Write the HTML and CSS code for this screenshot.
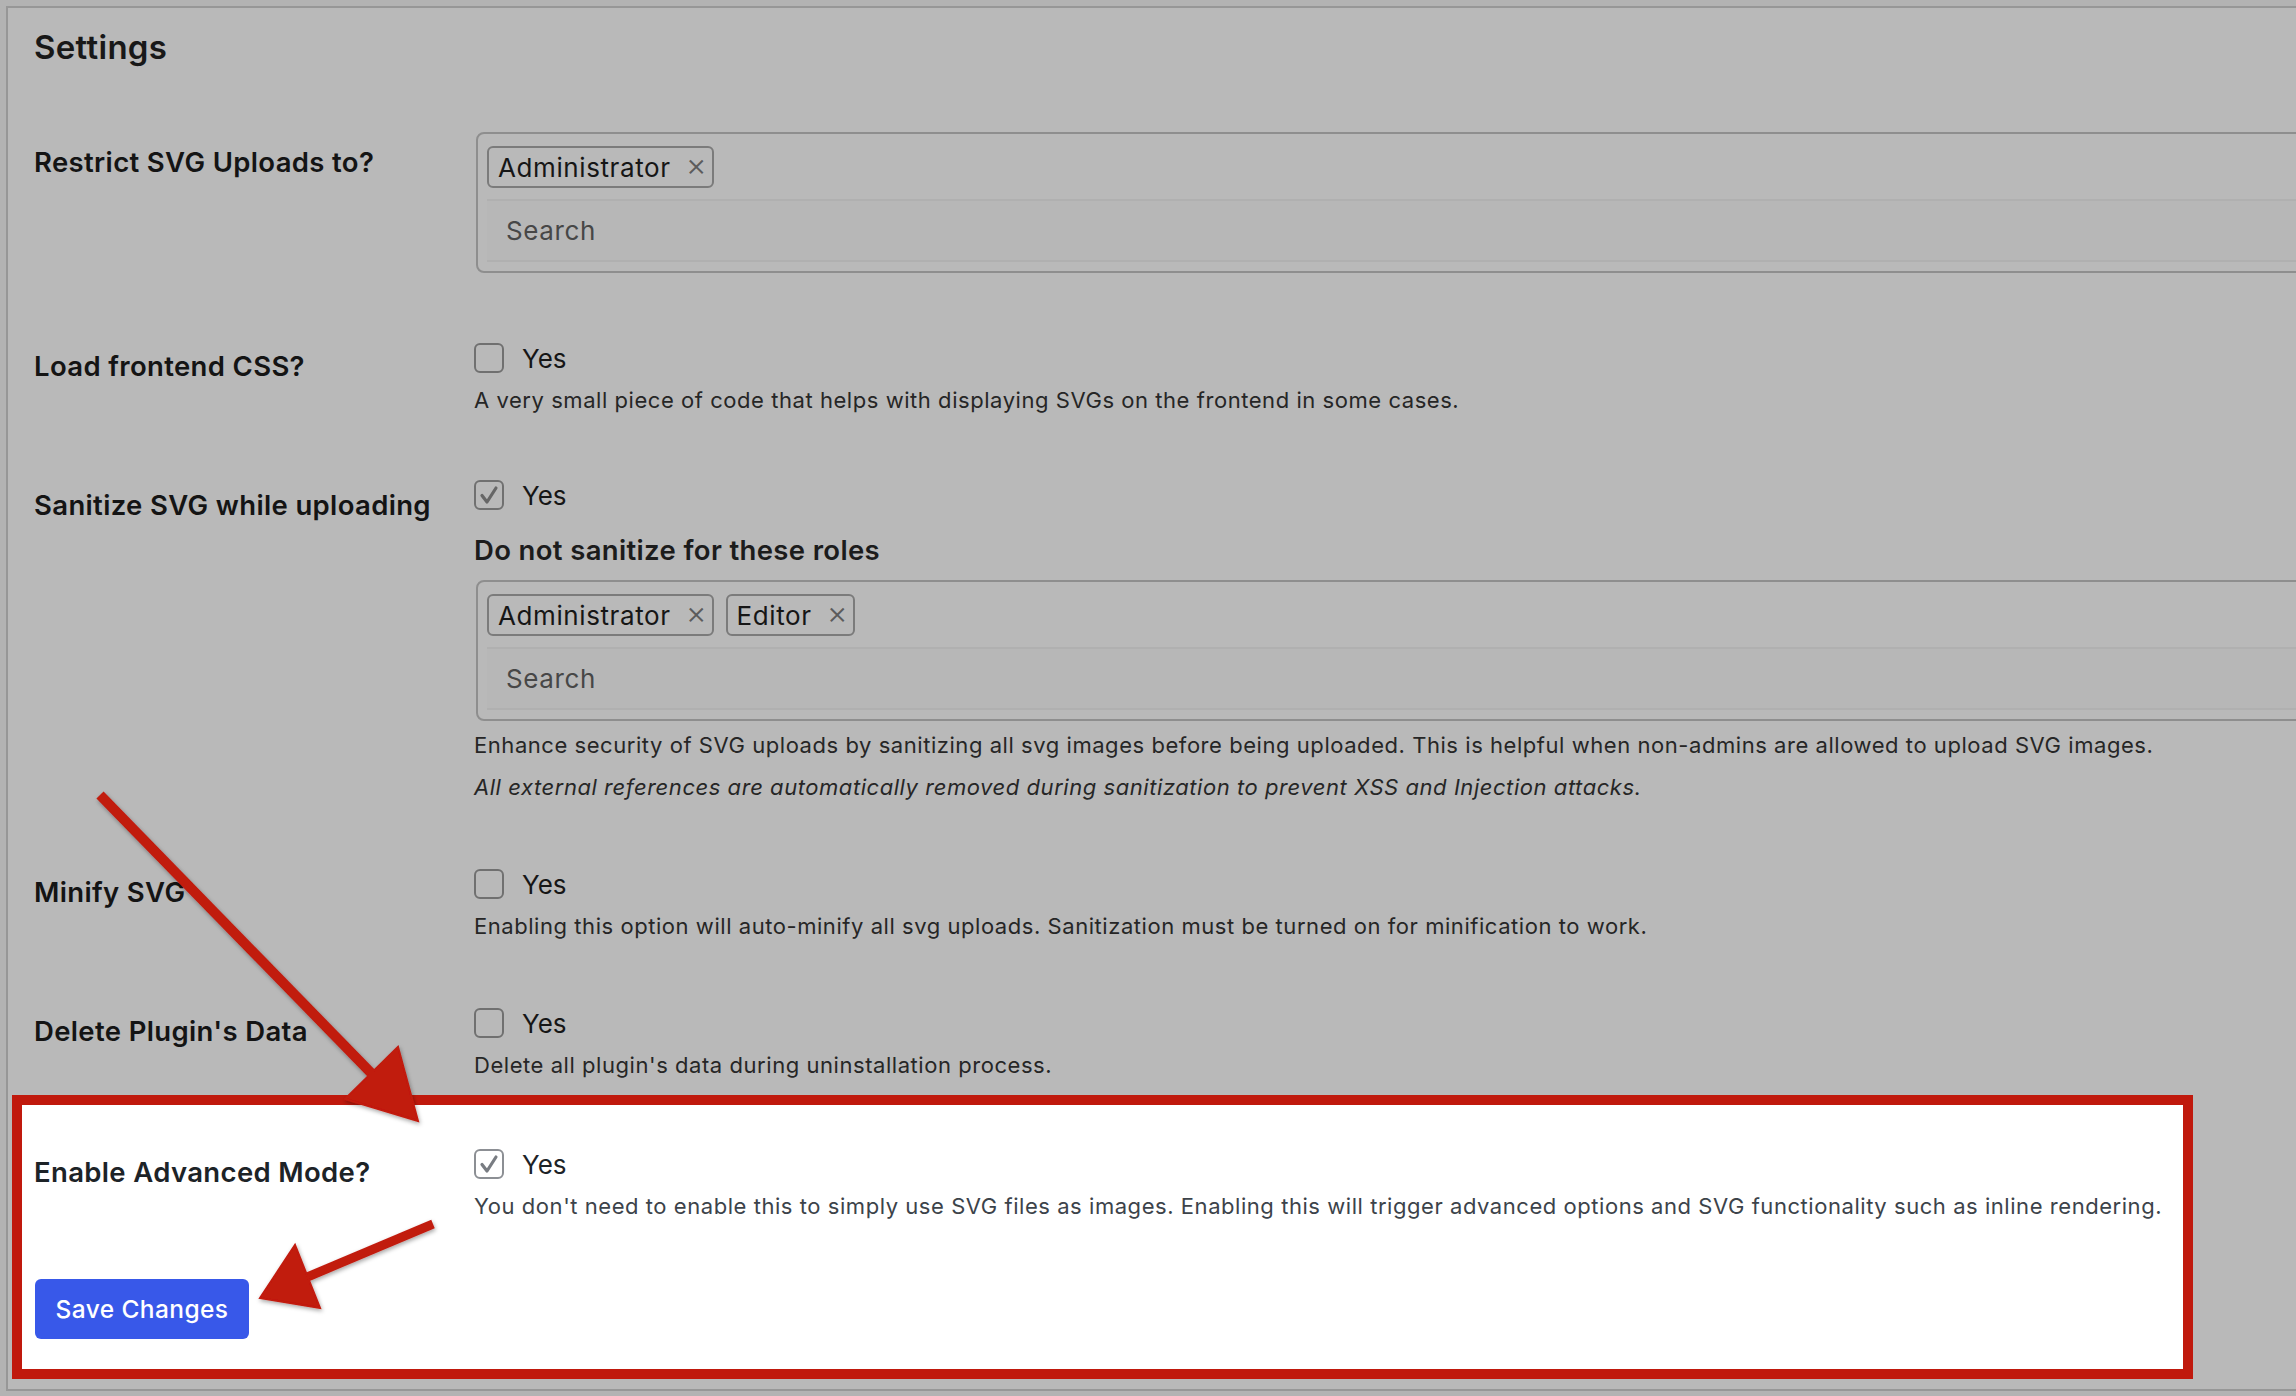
FILE: index.html
```html
<!DOCTYPE html>
<html lang="en">
<head>
<meta charset="utf-8">
<title>Settings</title>
<link rel="stylesheet" href="styles.css">
</head>
<body>
<div class="card">
  <h2 class="title">Settings</h2>

  <div class="row row-first">
    <div class="label">Restrict SVG Uploads to?</div>
    <div class="field">
      <div class="select">
        <div class="tags">
          <span class="tag">Administrator<span class="x">×</span></span>
        </div>
        <div class="search">Search</div>
      </div>
    </div>
  </div>

  <div class="row">
    <div class="label">Load frontend CSS?</div>
    <div class="field">
      <div class="check"><span class="cb"></span><span>Yes</span></div>
      <p class="desc">A very small piece of code that helps with displaying SVGs on the frontend in some cases.</p>
    </div>
  </div>

  <div class="row row-sanitize">
    <div class="label">Sanitize SVG while uploading</div>
    <div class="field">
      <div class="check"><span class="cb"><svg viewBox="0 0 26 26" class="tick"><path d="M6 13.5 L11 20 L20 6"/></svg></span><span>Yes</span></div>
      <div class="subhead">Do not sanitize for these roles</div>
      <div class="select select-roles">
        <div class="tags">
          <span class="tag">Administrator<span class="x">×</span></span>
          <span class="tag">Editor<span class="x">×</span></span>
        </div>
        <div class="search">Search</div>
      </div>
      <p class="desc desc-after-box">Enhance security of SVG uploads by sanitizing all svg images before being uploaded. This is helpful when non-admins are allowed to upload SVG images.</p>
      <p class="desc desc-italic">All external references are automatically removed during sanitization to prevent XSS and Injection attacks.</p>
    </div>
  </div>

  <div class="row">
    <div class="label">Minify SVG</div>
    <div class="field">
      <div class="check"><span class="cb"></span><span>Yes</span></div>
      <p class="desc">Enabling this option will auto-minify all svg uploads. Sanitization must be turned on for minification to work.</p>
    </div>
  </div>

  <div class="row">
    <div class="label">Delete Plugin's Data</div>
    <div class="field">
      <div class="check"><span class="cb"></span><span>Yes</span></div>
      <p class="desc">Delete all plugin's data during uninstallation process.</p>
    </div>
  </div>

  <div class="highlight">
    <div class="row">
      <div class="label">Enable Advanced Mode?</div>
      <div class="field">
        <div class="check"><span class="cb cb-light"><svg viewBox="0 0 26 26" class="tick"><path d="M6 13.5 L11 20 L20 6"/></svg></span><span>Yes</span></div>
        <p class="desc desc-light">You don't need to enable this to simply use SVG files as images. Enabling this will trigger advanced options and SVG functionality such as inline rendering.</p>
      </div>
    </div>
    <div class="submit"><button class="btn" type="button">Save Changes</button></div>
  </div>
</div>

<svg class="arrows" width="2296" height="1396" viewBox="0 0 2296 1396">
  <defs>
    <filter id="sh" x="-20%" y="-20%" width="140%" height="140%">
      <feDropShadow dx="1" dy="2" stdDeviation="2" flood-color="#000" flood-opacity="0.35"/>
    </filter>
  </defs>
  <g filter="url(#sh)" fill="#c11a0e" stroke="#c11a0e">
    <line x1="100" y1="795" x2="376" y2="1078" stroke-width="10"/>
    <polygon points="418,1121 345,1099 398,1047" stroke-width="2"/>
    <line x1="433" y1="1224" x2="305" y2="1278" stroke-width="9"/>
    <polygon points="260,1298 295,1245 320,1308" stroke-width="2"/>
  </g>
</svg>
</body>
</html>
```

FILE: styles.css
```css
html, body {
  margin: 0;
  padding: 0;
  overflow: hidden;
}

body {
  width: 2296px;
  height: 1396px;
  position: relative;
  background: #b3b3b3;
  font-family: Inter, "Noto Sans", "Liberation Sans", sans-serif;
  color: #161616;
}

.card {
  box-sizing: border-box;
  width: 2400px;
  margin: 6px 0 0 6px;
  padding: 0 0 10px 26px;
  background: #b9b9b9;
  border-top: 2px solid #979797;
  border-left: 2px solid #979797;
  border-bottom: 2px solid #979797;
}

.title {
  margin: 0;
  padding: 19px 0 37px;
  font-size: 33px;
  line-height: 40px;
  font-weight: 600;
  letter-spacing: 0.3px;
  color: #181818;
}

.row {
  display: grid;
  grid-template-columns: 440px 1fr;
}

.label {
  padding-top: 41px;
  font-size: 27.5px;
  line-height: 36px;
  font-weight: 600;
  letter-spacing: 0.35px;
  color: #141414;
}

.row-first .label {
  padding-top: 40px;
}

.field {
  padding: 28px 0 31px;
  min-width: 0;
}

.row-first .field {
  padding-bottom: 34px;
}

.row-sanitize .field {
  padding-top: 26px;
}

.select {
  box-sizing: border-box;
  width: 1900px;
  margin-left: 2px;
  padding: 12px 0 9px 9px;
  border: 2px solid #8e8e8e;
  border-radius: 8px;
}

.tags {
  display: flex;
  gap: 12px;
  height: 42px;
}

.tag {
  display: flex;
  align-items: center;
  box-sizing: border-box;
  height: 42px;
  padding: 0 5px 0 9px;
  border: 2px solid #7b7b7b;
  border-radius: 6px;
  font-size: 26px;
  letter-spacing: 0.6px;
  color: #161616;
}

.x {
  margin-left: 15px;
  font-size: 32px;
  line-height: 1;
  font-weight: 300;
  letter-spacing: 0;
  color: #5c5c5c;
  position: relative;
  top: -2px;
}

.search {
  display: flex;
  align-items: center;
  box-sizing: border-box;
  height: 63px;
  margin-top: 11px;
  padding-left: 19px;
  background: #b7b7b7;
  border-top: 2px solid #b0b0b0;
  border-bottom: 2px solid #b0b0b0;
  font-size: 26px;
  letter-spacing: 0.6px;
  color: #474747;
}

.check {
  display: flex;
  align-items: center;
  gap: 18px;
  height: 46px;
  font-size: 26px;
  color: #161616;
}

.cb {
  display: flex;
  align-items: center;
  justify-content: center;
  box-sizing: border-box;
  width: 30px;
  height: 30px;
  border: 2px solid #707070;
  border-radius: 6px;
}

.tick {
  width: 26px;
  height: 26px;
  fill: none;
  stroke: #666;
  stroke-width: 3.2;
  stroke-linecap: round;
  stroke-linejoin: round;
}

.cb-light {
  border-color: #8c8f94;
}

.cb-light .tick {
  stroke: #787c82;
}

.desc {
  margin: 4px 0 0;
  font-size: 22px;
  line-height: 30px;
  letter-spacing: 0.55px;
  color: #262626;
}

.subhead {
  margin-top: 14px;
  font-size: 27.5px;
  line-height: 36px;
  font-weight: 600;
  letter-spacing: 0.35px;
  color: #1c1c1c;
}

.select-roles {
  margin-top: 12px;
}

.desc-after-box {
  margin-top: 9px;
}

.desc-italic {
  margin-top: 12px;
  font-style: italic;
}

.highlight {
  box-sizing: border-box;
  width: 2181px;
  margin: -16px 0 0 -22px;
  padding: 8px 0 30px 12px;
  background: #ffffff;
  border: 10px solid #c0190d;
}

.highlight .label {
  color: #1d2327;
}

.highlight .check {
  color: #1d2327;
}

.desc-light {
  color: #3c434a;
}

.submit {
  margin-top: 27px;
  padding-left: 1px;
}

.btn {
  width: 214px;
  height: 60px;
  padding: 0;
  border: 0;
  border-radius: 6px;
  background: #3858e9;
  color: #ffffff;
  font-family: Inter, "Noto Sans", "Liberation Sans", sans-serif;
  font-size: 24.5px;
  font-weight: 500;
  letter-spacing: 0.4px;
}

.arrows {
  position: absolute;
  left: 0;
  top: 0;
  pointer-events: none;
}
```
